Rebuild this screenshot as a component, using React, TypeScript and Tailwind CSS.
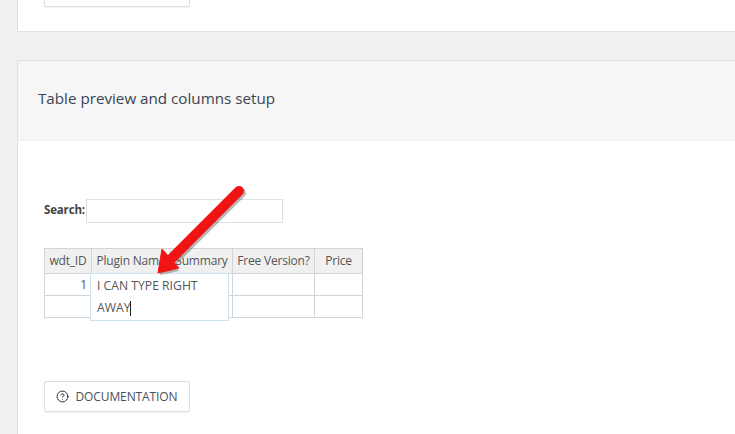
import { CircleHelp } from "lucide-react";

function DocButton() {
    return (
        <button className="shrink-0 flex items-center justify-center gap-[6px] w-[146px] h-[31px] bg-white border border-[#dedede] rounded-[2px] shadow-[0_1px_1px_rgba(0,0,0,0.06)] text-[12px] text-[#4a4f5c] tracking-[-0.1px]">
            <CircleHelp size={13} strokeWidth={1.75} color="#222" />
            DOCUMENTATION
        </button>
    );
}

const cols = [
    { name: "wdt_ID", w: "w-[47px]" },
    { name: "Plugin Name", w: "w-[79px]" },
    { name: "Summary", w: "w-[62px]" },
    { name: "Free Version?", w: "w-[82px]" },
    { name: "Price", w: "w-[48px]" },
];

export default function App() {
    return (
        <div className="h-[434px] w-[735px] overflow-hidden bg-[#f0f0f0] pl-[17px] font-['Open_Sans',sans-serif] text-[#444]">
            {/* Top card */}
            <section className="h-[32px] flex flex-col justify-end bg-white border-l border-b border-[#e2e2e2] pl-[26px] pb-[24px]">
                <div className="shrink-0 w-[146px] h-[31px] bg-white border border-[#dedede] rounded-[2px] shadow-[0_1px_1px_rgba(0,0,0,0.06)]" />
            </section>

            {/* Table card */}
            <section className="relative mt-[28px] h-[400px] bg-white border-l border-t border-[#e2e2e2]">
                <header className="h-[80px] flex items-center pl-[20px] pb-[5px] bg-[#f6f6f6] border-b border-[#eeeeee] text-[15.2px] text-[#3c4350]">
                    Table preview and columns setup
                </header>

                <div className="pl-[26px] pt-[58px]">
                    <div className="flex items-center h-[24px]">
                        <span className="w-[42px] pb-[2px] text-[11.5px] font-bold tracking-[-0.15px] text-[#444]">Search:</span>
                        <div className="w-[197px] h-[24px] border border-[#e0e0e0] bg-white" />
                    </div>

                    <table className="mt-[25px] border-collapse text-[12px] text-[#555] tracking-[-0.2px]">
                        <thead>
                            <tr className="h-[25px] bg-[#f0f0f0]">
                                {cols.map((c) => (
                                    <th key={c.name} className={`${c.w} p-0 border border-[#d4d4d4] font-normal whitespace-nowrap`}>
                                        {c.name}
                                    </th>
                                ))}
                            </tr>
                        </thead>
                        <tbody>
                            <tr className="h-[22px]">
                                <td className="border border-[#d4d4d4] text-right pr-[4px] p-0">1</td>
                                <td className="border border-[#d4d4d4]" />
                                <td className="border border-[#d4d4d4]" />
                                <td className="border border-[#d4d4d4]" />
                                <td className="border border-[#d4d4d4]" />
                            </tr>
                            <tr className="h-[22px]">
                                <td className="border border-[#d4d4d4]" />
                                <td className="border border-[#d4d4d4]" />
                                <td className="border border-[#d4d4d4]" />
                                <td className="border border-[#d4d4d4]" />
                                <td className="border border-[#d4d4d4]" />
                            </tr>
                        </tbody>
                    </table>

                    <div className="mt-[63px]">
                        <DocButton />
                    </div>
                </div>

                {/* Cell editor */}
                <div className="absolute left-[72px] top-[212px] w-[139px] h-[48px] bg-white border border-[#cfe3ee] pl-[6px] pt-[1px] text-[12.2px] leading-[22px] text-[#555]">
                    <div>I CAN TYPE RIGHT</div>
                    <div className="flex items-center">
                        AWAY<span className="inline-block w-px h-[15px] bg-[#222]" />
                    </div>
                </div>

                {/* Red arrow annotation */}
                <svg className="absolute left-[119px] top-[114px]" width="120" height="105" viewBox="0 0 120 105" fill="none">
                    <g transform="translate(2 2)" opacity="0.3">
                        <path d="M102 16 L34 84" stroke="#222" strokeWidth="10" strokeLinecap="round" />
                        <path d="M21 98 L40 94 L25 77 Z" fill="#222" />
                    </g>
                    <path d="M102 16 L34 84" stroke="#f01414" strokeWidth="10" strokeLinecap="round" />
                    <path d="M21 98 L42 93 L25 74 Z" fill="#f01414" stroke="#f01414" strokeLinejoin="round" />
                </svg>
            </section>
        </div>
    );
}
